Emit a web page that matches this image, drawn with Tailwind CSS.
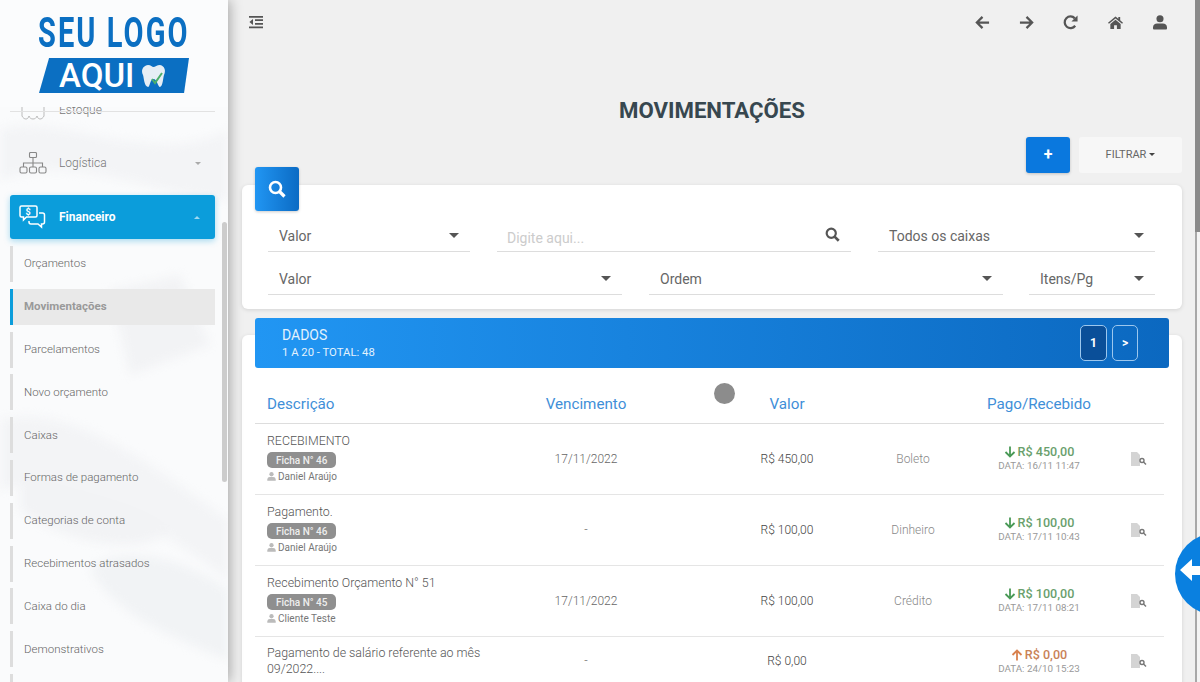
<!DOCTYPE html>
<html lang="pt-BR">
<head>
    <meta charset="UTF-8">
    <title>Movimentações</title>
    <script src="https://cdn.jsdelivr.net/npm/@tailwindcss/browser@4"></script>
</head>
<body class="bg-[#f0f0f0] font-['Roboto',sans-serif] text-[#555] overflow-hidden">
<div class="relative flex h-[682px] w-[1200px] overflow-hidden">

    <!-- sidebar -->
    <aside class="relative z-20 flex h-full w-[228px] shrink-0 flex-col overflow-hidden bg-[#fafbfc] shadow-[2px_0_12px_rgba(0,0,0,0.3)]">
        <!-- faint photo behind the menu -->
        <svg class="absolute inset-0 h-full w-full blur-[5px]" viewBox="0 0 228 682" fill="none">
            <path d="M0 130 C60 110 150 170 228 130 V200 C160 200 80 150 0 180Z" fill="#f3f4f6"/>
            <path d="M110 290 l70 -15 l30 70 l-80 30Z" fill="#f2f3f5"/>
            <path d="M0 420 C70 400 160 470 228 520 V580 C150 520 60 470 0 490Z" fill="#f3f4f6"/>
            <path d="M90 570 C120 540 190 560 228 590 V660 C180 640 120 620 90 570Z" fill="#f1f3f5"/>
            <path d="M20 470 C60 490 150 500 170 530 C140 560 60 540 20 510Z" fill="#f2f3f5"/>
        </svg>

        <div class="relative z-10 flex h-[107px] shrink-0 flex-col items-center bg-[#fbfcfd]">
            <div class="mt-[13px] w-max scale-x-[0.69] whitespace-nowrap text-[42px] leading-[40px] font-bold tracking-[3px] text-[#0b6fc2]">SEU LOGO</div>
            <div class="mt-[5px] flex h-[35px] w-[150px] items-center gap-[6px] bg-[#0b6fc2] pl-[20px] [clip-path:polygon(6.7%_0,100%_0,96.7%_100%,0_100%)]">
                <span class="text-[33px] leading-none font-medium text-white">AQUI</span>
                <svg class="h-[24px] w-[27px]" viewBox="0 0 27 24">
                    <path d="M8 1 C11 1 12 3 13.5 3 C15 3 17 1 20 1 C25 2 26 7 24 11 C23 14 23 22 20 23 C18 23 17 15 13.5 15 C10 15 10 23 8 23 C4 22 4 14 3 11 C1 7 2 2 8 1Z" fill="#e6eef5"/>
                    <path d="M12 15 l3 4 l7 -10" stroke="#4caf6a" stroke-width="2" fill="none"/>
                </svg>
            </div>
        </div>
        <div class="absolute left-[10px] top-[111px] z-10 h-px w-[205px] bg-[#e2e2e2]"></div>

        <nav class="relative z-0 -mt-[12px] flex flex-col text-[12px] text-[#777]">
            <!-- cut off by the logo header -->
            <div class="flex h-[30px] items-center pl-[21px] font-light">
                <svg class="h-[22px] w-[24px] text-[#bbb]" viewBox="0 0 24 22" fill="none" stroke="currentColor">
                    <path d="M1 4 V17 C3 21 7 21 8 17 C9 21 15 21 16 17 C17 21 21 21 23 17 V4"/>
                </svg>
                <span class="ml-[14px]">Estoque</span>
            </div>

            <div class="mt-[14px] flex h-[48px] items-center pl-[19px] pr-[27px]">
                <svg class="h-[22px] w-[28px] text-[#888]" viewBox="0 0 28 22" fill="none" stroke="currentColor" stroke-width="1.1">
                    <rect x="10.5" y="0.5" width="7" height="5" rx="1"/>
                    <path d="M14 6 v5 M4.5 15 v-4 h19 v4 M14 11 v4"/>
                    <rect x="1" y="15" width="7" height="6" rx="1.5"/>
                    <rect x="10.5" y="15" width="7" height="6" rx="1.5"/>
                    <rect x="20" y="15" width="7" height="6" rx="1.5"/>
                </svg>
                <span class="ml-[12px] flex-1 font-light">Logística</span>
                <span class="h-0 w-0 border-x-[3px] border-t-[3px] border-x-transparent border-t-[#aaa]"></span>
            </div>

            <div class="ml-[10px] mr-[13px] mt-[8px] flex h-[44px] items-center rounded-[3px] bg-[#0b9ddb] pl-[9px] pr-[15px] font-bold text-white shadow-[0_2px_6px_rgba(11,157,219,0.35)]">
                <svg class="h-[24px] w-[27px]" viewBox="0 0 27 24" fill="none" stroke="white" stroke-width="1.5">
                    <path d="M2.5 1 h14 a1.5 1.5 0 0 1 1.5 1.5 v8 a1.5 1.5 0 0 1 -1.5 1.5 h-9 l-3 3 v-3 h-2 a1.5 1.5 0 0 1 -1.5 -1.5 v-8 a1.5 1.5 0 0 1 1.5 -1.5Z"/>
                    <path d="M20 8 h3.5 a2 2 0 0 1 2 2 v7 a2 2 0 0 1 -2 2 h-1 v3 l-3.5 -3 h-7 a2 2 0 0 1 -2 -2 v-1"/>
                    <text x="6.5" y="10" font-size="9" font-weight="700" fill="white" stroke="none" font-family="Roboto">$</text>
                </svg>
                <span class="ml-[13px] flex-1">Financeiro</span>
                <span class="h-0 w-0 border-x-[3px] border-b-[3px] border-x-transparent border-b-white/60"></span>
            </div>

            <ul class="ml-[10px] mr-[13px] mt-[7px] flex flex-col gap-[6.8px] text-[11.5px] font-light text-[#666]">
                <li class="flex h-[36px] shrink-0 items-center border-l-[3px] border-[#ddd] pl-[11px]">Orçamentos</li>
                <li class="flex h-[36px] shrink-0 items-center border-l-[3px] border-[#0b9ddb] bg-[#e9e9e9] pl-[11px] font-bold text-[#999]">Movimentações</li>
                <li class="flex h-[36px] shrink-0 items-center border-l-[3px] border-[#ddd] pl-[11px]">Parcelamentos</li>
                <li class="flex h-[36px] shrink-0 items-center border-l-[3px] border-[#ddd] pl-[11px]">Novo orçamento</li>
                <li class="flex h-[36px] shrink-0 items-center border-l-[3px] border-[#ddd] pl-[11px]">Caixas</li>
                <li class="flex h-[36px] shrink-0 items-center border-l-[3px] border-[#ddd] pl-[11px]">Formas de pagamento</li>
                <li class="flex h-[36px] shrink-0 items-center border-l-[3px] border-[#ddd] pl-[11px]">Categorias de conta</li>
                <li class="flex h-[36px] shrink-0 items-center border-l-[3px] border-[#ddd] pl-[11px]">Recebimentos atrasados</li>
                <li class="flex h-[36px] shrink-0 items-center border-l-[3px] border-[#ddd] pl-[11px]">Caixa do dia</li>
                <li class="flex h-[36px] shrink-0 items-center border-l-[3px] border-[#ddd] pl-[11px]">Demonstrativos</li>
                <li class="flex h-[36px] shrink-0 items-center border-l-[3px] border-[#ddd] pl-[11px]"></li>
            </ul>
        </nav>

        <!-- sidebar scrollbar -->
        <div class="absolute top-[222px] right-[1px] h-[260px] w-[5px] rounded-full bg-[#cccccc]"></div>
    </aside>

    <!-- main -->
    <main class="relative flex min-w-0 flex-1 flex-col overflow-hidden">
        <header class="flex h-[44px] shrink-0 items-center justify-between pl-[21px] pr-[33px] text-[#555]">
            <svg class="h-[14px] w-[14px]" viewBox="0 0 14 13" fill="currentColor" preserveAspectRatio="none">
                <path d="M0 1 h14 v1.6 h-14Z M6 4 h8 v1.6 h-8Z M6 7.4 h8 v1.6 h-8Z M0 10.6 h14 v1.6 h-14Z M4 3.8 v5.4 l-3.6 -2.7Z"/>
            </svg>
            <div class="flex items-center gap-[29px]">
                <svg class="h-[15px] w-[15px]" viewBox="0 0 16 16" fill="none" stroke="currentColor" stroke-width="2.4"><path d="M15 8 H2 M8 2 L2 8 l6 6"/></svg>
                <svg class="h-[15px] w-[15px]" viewBox="0 0 16 16" fill="none" stroke="currentColor" stroke-width="2.4"><path d="M1 8 h13 M8 2 l6 6 l-6 6"/></svg>
                <svg class="h-[15px] w-[15px]" viewBox="0 0 16 16" fill="none" stroke="currentColor" stroke-width="2.4"><path d="M13 11.5 A6.2 6.2 0 1 1 12.6 3.6"/><path d="M15.5 0.5 v6.5 h-6.5Z" fill="currentColor" stroke="none"/></svg>
                <svg class="h-[15px] w-[17px]" viewBox="0 0 17 16" fill="currentColor"><path d="M8.5 1.5 L0.5 8.2 l1 1.2 L8.5 3.6 l7 5.8 l1 -1.2 L13.5 5.7 V2 h-2 v2 Z"/><path d="M8.5 5 L3 9.5 V15 h4 v-4 h3 v4 h4 V9.5Z"/></svg>
                <svg class="h-[15px] w-[14px]" viewBox="0 0 15 16" fill="currentColor"><circle cx="7.5" cy="4" r="3.8"/><path d="M1 15.5 a1 1 0 0 1 -1 -1 v-1.5 a4.5 4.5 0 0 1 4.5 -4 h6 a4.5 4.5 0 0 1 4.5 4 v1.5 a1 1 0 0 1 -1 1Z"/></svg>
            </div>
        </header>

        <h1 class="mt-[52px] h-[30px] shrink-0 pr-[4px] text-center text-[22.2px] leading-[28px] font-bold text-[#37474f]">MOVIMENTAÇÕES</h1>

        <div class="mt-[11px] flex h-[36px] shrink-0 justify-end gap-[9px] pr-[18px]">
            <button class="flex w-[44px] items-center justify-center rounded-[3px] bg-[#0a78de] text-[16px] font-bold text-white shadow-[0_1px_3px_rgba(0,0,0,0.2)]">+</button>
            <button class="flex w-[103px] items-center justify-center gap-[3px] rounded-[3px] bg-[#f7f7f7] text-[11px] text-[#666]">
                FILTRAR
                <span class="mb-[1px] h-0 w-0 border-x-[3px] border-t-[3px] border-x-transparent border-t-[#444]"></span>
            </button>
        </div>

        <!-- filters -->
        <section class="relative ml-[14px] mr-[18px] mt-[12px] h-[124px] shrink-0 rounded-[6px] bg-white px-[26px] pt-[33px] shadow-[0_1px_4px_rgba(0,0,0,0.12)]">
            <div class="absolute -top-[18px] left-[13px] flex h-[44px] w-[44px] items-center justify-center rounded-[3px] bg-gradient-to-r from-[#2196f3] to-[#0b6bc4] shadow-[0_1px_3px_rgba(0,0,0,0.2)]">
                <svg class="h-[18px] w-[18px]" viewBox="0 0 18 18" fill="none" stroke="white">
                    <circle cx="7.5" cy="7.5" r="5.5" stroke-width="2.6"/>
                    <path d="M11.5 11.5 L16.5 16.5" stroke-width="3.2"/>
                </svg>
            </div>

            <div class="flex h-[34px] items-stretch gap-[27px] text-[14px] text-[#666]">
                <div class="flex w-[202px] items-center justify-between border-b border-[#ddd] pt-[4px] pl-[11px] pr-[11px]">
                    Valor <span class="mb-[3px] h-0 w-0 border-x-[5px] border-t-[5px] border-x-transparent border-t-[#555]"></span>
                </div>
                <div class="flex w-[354px] items-center justify-between border-b border-[#ddd] pl-[10px] pr-[11px] pt-[7px]">
                    <span class="text-[#ccc]">Digite aqui...</span>
                    <svg class="mb-[7px] h-[15px] w-[15px]" viewBox="0 0 18 18" fill="none" stroke="#555">
                        <circle cx="7.5" cy="7.5" r="5.5" stroke-width="2.6"/>
                        <path d="M11.5 11.5 L16.5 16.5" stroke-width="3.2"/>
                    </svg>
                </div>
                <div class="flex w-[277px] items-center justify-between border-b border-[#ddd] pt-[4px] pl-[11px] pr-[11px]">
                    Todos os caixas <span class="mb-[3px] h-0 w-0 border-x-[5px] border-t-[5px] border-x-transparent border-t-[#555]"></span>
                </div>
            </div>
            <div class="mt-[9px] flex h-[34px] items-stretch text-[14px] text-[#666]">
                <div class="flex w-[354px] items-center justify-between border-b border-[#ddd] pt-[4px] pl-[11px] pr-[11px]">
                    Valor <span class="mb-[3px] h-0 w-0 border-x-[5px] border-t-[5px] border-x-transparent border-t-[#555]"></span>
                </div>
                <div class="ml-[27px] flex w-[354px] items-center justify-between border-b border-[#ddd] pt-[4px] pl-[11px] pr-[11px]">
                    Ordem <span class="mb-[3px] h-0 w-0 border-x-[5px] border-t-[5px] border-x-transparent border-t-[#555]"></span>
                </div>
                <div class="ml-[26px] flex w-[126px] items-center justify-between border-b border-[#ddd] pt-[4px] pl-[11px] pr-[11px]">
                    Itens/Pg <span class="mb-[3px] h-0 w-0 border-x-[5px] border-t-[5px] border-x-transparent border-t-[#555]"></span>
                </div>
            </div>
        </section>

        <!-- data card -->
        <section class="relative ml-[14px] mr-[18px] mt-[26px] h-[360px] shrink-0 rounded-t-[6px] bg-white px-[13px] shadow-[0_1px_4px_rgba(0,0,0,0.12)]">
            <div class="absolute -top-[17px] left-[13px] right-[13px] flex h-[50px] items-center justify-between rounded-[3px] bg-gradient-to-r from-[#2196f3] to-[#0b68c0] pl-[27px] pr-[31px] text-white">
                <div>
                    <div class="text-[14px] leading-[17px] text-[#e3f2fd]">DADOS</div>
                    <div class="mt-[2px] text-[11.3px] leading-[13px] text-[#e3f2fd]">1 A 20 - TOTAL: 48</div>
                </div>
                <div class="flex gap-[5px] text-[12px] font-bold">
                    <div class="flex h-[36px] w-[27px] items-center justify-center rounded-[5px] border border-[#9cc7ee] bg-[#0a4f99]">1</div>
                    <div class="flex h-[36px] w-[26px] items-center justify-center rounded-[5px] border border-[#9cc7ee]">&gt;</div>
                </div>
            </div>

            <table class="mt-[33px] w-[909px] table-fixed border-collapse text-[12px] font-light">
                <thead>
                    <tr class="h-[55px] border-b border-[#ddd] text-[15.2px] text-[#3f8fd8]">
                        <th class="w-[261px] pl-[12px] pt-[18px] text-left font-normal">Descrição</th>
                        <th class="w-[206px] pr-[66px] pt-[18px] font-normal">Vencimento</th>
                        <th class="w-[130px] pt-[18px] font-normal">Valor</th>
                        <th class="w-[122px]"></th>
                        <th class="w-[130px] pt-[18px] font-normal">Pago/Recebido</th>
                        <th class="w-[60px]"></th>
                    </tr>
                </thead>
                <tbody>
                    <tr class="h-[71px] border-b border-[#e5e5e5]">
                        <td class="pl-[12px]">
                            <div class="text-[12.4px] leading-[16px] text-[#555]">RECEBIMENTO</div>
                            <div class="mt-[3px] inline-flex h-[16px] items-center rounded-[5px] bg-[#8f8f8f] px-[9px] text-[10px] font-medium text-[#eee]">Ficha N° 46</div>
                            <div class="flex items-center gap-[2px] text-[10px] leading-[15px] font-normal text-[#777]">
                                <svg class="h-[9px] w-[9px]" viewBox="0 0 15 16" fill="#bbb"><circle cx="7.5" cy="4" r="3.8"/><path d="M0 15.5 v-2.5 a4.5 4.5 0 0 1 4.5 -4 h6 a4.5 4.5 0 0 1 4.5 4 v2.5Z"/></svg>
                                Daniel Araújo
                            </div>
                        </td>
                        <td class="pr-[66px] text-center text-[#666]">17/11/2022</td>
                        <td class="text-center text-[#444]">R$ 450,00</td>
                        <td class="text-center text-[#888]">Boleto</td>
                        <td class="text-center">
                            <div class="flex items-center justify-center gap-[2px] text-[12.6px] leading-[14px] font-medium text-[#6a9f6d]">
                                <svg class="h-[12px] w-[12px]" viewBox="0 0 12 12" fill="none" stroke="#4a9a57" stroke-width="1.8"><path d="M6 0.5 V10.5 M1.5 6 L6 10.5 L10.5 6"/></svg>
                                R$ 450,00
                            </div>
                            <div class="mt-[1px] text-[9.8px] leading-[12px] font-normal text-[#999]">DATA: 16/11 11:47</div>
                        </td>
                        <td>
                            <svg class="ml-[27px] h-[14px] w-[16px]" viewBox="0 0 16 14"><path d="M0 0 h6 l3 3 v11 h-9Z" fill="#d4d4d4"/><circle cx="11" cy="8.5" r="2" fill="none" stroke="#777" stroke-width="1.4"/><path d="M12.5 10 l2.5 2.5" stroke="#777" stroke-width="1.4"/></svg>
                        </td>
                    </tr>
                    <tr class="h-[71px] border-b border-[#e5e5e5]">
                        <td class="pl-[12px]">
                            <div class="text-[12.4px] leading-[16px] text-[#555]">Pagamento.</div>
                            <div class="mt-[3px] inline-flex h-[16px] items-center rounded-[5px] bg-[#8f8f8f] px-[9px] text-[10px] font-medium text-[#eee]">Ficha N° 46</div>
                            <div class="flex items-center gap-[2px] text-[10px] leading-[15px] font-normal text-[#777]">
                                <svg class="h-[9px] w-[9px]" viewBox="0 0 15 16" fill="#bbb"><circle cx="7.5" cy="4" r="3.8"/><path d="M0 15.5 v-2.5 a4.5 4.5 0 0 1 4.5 -4 h6 a4.5 4.5 0 0 1 4.5 4 v2.5Z"/></svg>
                                Daniel Araújo
                            </div>
                        </td>
                        <td class="pr-[66px] text-center text-[#666]">-</td>
                        <td class="text-center text-[#444]">R$ 100,00</td>
                        <td class="text-center text-[#888]">Dinheiro</td>
                        <td class="text-center">
                            <div class="flex items-center justify-center gap-[2px] text-[12.6px] leading-[14px] font-medium text-[#6a9f6d]">
                                <svg class="h-[12px] w-[12px]" viewBox="0 0 12 12" fill="none" stroke="#4a9a57" stroke-width="1.8"><path d="M6 0.5 V10.5 M1.5 6 L6 10.5 L10.5 6"/></svg>
                                R$ 100,00
                            </div>
                            <div class="mt-[1px] text-[9.8px] leading-[12px] font-normal text-[#999]">DATA: 17/11 10:43</div>
                        </td>
                        <td>
                            <svg class="ml-[27px] h-[14px] w-[16px]" viewBox="0 0 16 14"><path d="M0 0 h6 l3 3 v11 h-9Z" fill="#d4d4d4"/><circle cx="11" cy="8.5" r="2" fill="none" stroke="#777" stroke-width="1.4"/><path d="M12.5 10 l2.5 2.5" stroke="#777" stroke-width="1.4"/></svg>
                        </td>
                    </tr>
                    <tr class="h-[71px] border-b border-[#e5e5e5]">
                        <td class="pl-[12px]">
                            <div class="text-[12.4px] leading-[16px] text-[#555]">Recebimento Orçamento N° 51</div>
                            <div class="mt-[3px] inline-flex h-[16px] items-center rounded-[5px] bg-[#8f8f8f] px-[9px] text-[10px] font-medium text-[#eee]">Ficha N° 45</div>
                            <div class="flex items-center gap-[2px] text-[10px] leading-[15px] font-normal text-[#777]">
                                <svg class="h-[9px] w-[9px]" viewBox="0 0 15 16" fill="#bbb"><circle cx="7.5" cy="4" r="3.8"/><path d="M0 15.5 v-2.5 a4.5 4.5 0 0 1 4.5 -4 h6 a4.5 4.5 0 0 1 4.5 4 v2.5Z"/></svg>
                                Cliente Teste
                            </div>
                        </td>
                        <td class="pr-[66px] text-center text-[#666]">17/11/2022</td>
                        <td class="text-center text-[#444]">R$ 100,00</td>
                        <td class="text-center text-[#888]">Crédito</td>
                        <td class="text-center">
                            <div class="flex items-center justify-center gap-[2px] text-[12.6px] leading-[14px] font-medium text-[#6a9f6d]">
                                <svg class="h-[12px] w-[12px]" viewBox="0 0 12 12" fill="none" stroke="#4a9a57" stroke-width="1.8"><path d="M6 0.5 V10.5 M1.5 6 L6 10.5 L10.5 6"/></svg>
                                R$ 100,00
                            </div>
                            <div class="mt-[1px] text-[9.8px] leading-[12px] font-normal text-[#999]">DATA: 17/11 08:21</div>
                        </td>
                        <td>
                            <svg class="ml-[27px] h-[14px] w-[16px]" viewBox="0 0 16 14"><path d="M0 0 h6 l3 3 v11 h-9Z" fill="#d4d4d4"/><circle cx="11" cy="8.5" r="2" fill="none" stroke="#777" stroke-width="1.4"/><path d="M12.5 10 l2.5 2.5" stroke="#777" stroke-width="1.4"/></svg>
                        </td>
                    </tr>
                    <tr class="h-[50px]">
                        <td class="pl-[12px] text-[12.4px] leading-[16px] text-[#555]">Pagamento de salário referente ao mês 09/2022....</td>
                        <td class="pr-[66px] text-center text-[#666]">-</td>
                        <td class="text-center text-[#444]">R$ 0,00</td>
                        <td></td>
                        <td class="text-center">
                            <div class="flex items-center justify-center gap-[2px] text-[12.6px] leading-[14px] font-medium text-[#c98257]">
                                <svg class="h-[12px] w-[12px]" viewBox="0 0 12 12" fill="none" stroke="#d9824f" stroke-width="1.8"><path d="M6 11.5 V1.5 M1.5 6 L6 1.5 L10.5 6"/></svg>
                                R$ 0,00
                            </div>
                            <div class="mt-[1px] text-[9.8px] leading-[12px] font-normal text-[#999]">DATA: 24/10 15:23</div>
                        </td>
                        <td>
                            <svg class="ml-[27px] h-[14px] w-[16px]" viewBox="0 0 16 14"><path d="M0 0 h6 l3 3 v11 h-9Z" fill="#d4d4d4"/><circle cx="11" cy="8.5" r="2" fill="none" stroke="#777" stroke-width="1.4"/><path d="M12.5 10 l2.5 2.5" stroke="#777" stroke-width="1.4"/></svg>
                        </td>
                    </tr>
                </tbody>
            </table>
        </section>

        <!-- page scrollbar -->
        <div class="absolute inset-y-0 right-0 w-[5px] border-l-2 border-[#a8a8a8] bg-[#f4f4f4]">
            <div class="-ml-[2px] h-[232px] w-[5px] bg-[#8a8a8a]"></div>
        </div>
    </main>

    <!-- pointer highlight -->
    <div class="absolute left-[714px] top-[383px] z-30 h-[21px] w-[21px] rounded-full bg-[#8c8c8c] blur-[0.5px]"></div>

    <!-- help tab on the right edge -->
    <div class="absolute left-[1175px] top-[533px] z-30 h-[82px] w-[82px] rounded-full bg-[#0a80e0]">
        <svg class="absolute left-[5px] top-[24px] h-[26px] w-[20px]" viewBox="0 0 20 26" fill="white"><path d="M0 13 L12 2 V9 H20 V18 H12 V24Z"/></svg>
    </div>
</div>
</body>
</html>
